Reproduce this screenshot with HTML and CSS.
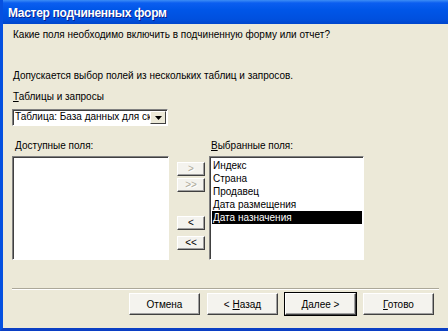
FILE: index.html
```html
<!DOCTYPE html>
<html lang="ru">
<head>
    <meta charset="UTF-8">
    <title>Мастер подчиненных форм</title>
    <link rel="stylesheet" href="styles.css">
</head>
<body>
    <div class="window">
        <div class="titlebar">Мастер подчиненных форм</div>
        <div class="content">
            <p class="question">Какие поля необходимо включить в подчиненную форму или отчет?</p>
            <p class="hint">Допускается выбор полей из нескольких таблиц и запросов.</p>
            <p class="label"><u>Т</u>аблицы и запросы</p>
            <div class="select">
                <span class="select-text">Таблица: База данных для ск</span>
                <span class="select-arrow">
                    <svg width="7" height="4" viewBox="0 0 7 4"><path d="M0 0h7L3.5 4z" fill="#000"/></svg>
                </span>
            </div>
            <div class="fields">
                <div class="col">
                    <p class="label"><u>Д</u>оступные поля:</p>
                    <div class="list"></div>
                </div>
                <div class="shuttle">
                    <button class="btn small" disabled>&gt;</button>
                    <button class="btn small" disabled>&gt;&gt;</button>
                    <button class="btn small gap">&lt;</button>
                    <button class="btn small last">&lt;&lt;</button>
                </div>
                <div class="col">
                    <p class="label"><u>В</u>ыбранные поля:</p>
                    <div class="list">
                        <div class="item">Индекс</div>
                        <div class="item">Страна</div>
                        <div class="item">Продавец</div>
                        <div class="item">Дата размещения</div>
                        <div class="item selected">Дата назначения</div>
                    </div>
                </div>
            </div>
        </div>
        <div class="footer">
            <button class="btn wide">Отмена</button>
            <button class="btn wide">&lt; <u>Н</u>азад</button>
            <button class="btn wide default"><u>Д</u>алее &gt;</button>
            <button class="btn wide"><u>Г</u>отово</button>
        </div>
    </div>
</body>
</html>
```

FILE: styles.css
```css
body {
    margin: 0;
    font-family: 'Liberation Sans', Arial, sans-serif;
    font-size: 10px;
    color: #000;
    background: #ece9d8;
}
.window {
    width: 448px;
    height: 331px;
    box-sizing: border-box;
    display: flex;
    flex-direction: column;
    background: #ece9d8;
    border-left: 3px solid #0550e0;
    border-bottom: 3px solid #0b3fc4;
    overflow: hidden;
}
.titlebar {
    height: 24px;
    margin-left: -3px;
    padding-left: 8px;
    line-height: 26px;
    color: #fff;
    font-weight: bold;
    font-size: 12px;
    letter-spacing: -0.3px;
    text-shadow: 1px 1px 0 #0a1e8c;
    background: linear-gradient(to bottom, #3d8df5 0, #0b5ef0 3px, #0056e8 40%, #0050de 80%, #0046cc 100%);
    flex-shrink: 0;
}
.content {
    padding: 4px 0 0 9px;
    flex: 1;
}
p {
    margin: 0;
}
.question {
    margin-left: 1px;
    line-height: 13px;
}
.hint {
    margin: 28px 0 0 1px;
    line-height: 13px;
}
.label {
    margin-left: 1px;
    line-height: 13px;
}
.content > .label {
    margin-top: 8px;
}
.select {
    margin-top: 6px;
    width: 156px;
    height: 17px;
    box-sizing: border-box;
    display: flex;
    background: #fff;
    border: 1px solid;
    border-color: #808080 #fff #fff #808080;
    box-shadow: inset 1px 1px 0 #404040;
}
.select-text {
    flex: 1;
    padding-left: 2px;
    line-height: 14px;
    white-space: nowrap;
    overflow: hidden;
}
.select-arrow {
    width: 14px;
    display: flex;
    align-items: center;
    justify-content: center;
    margin: 1px 1px 1px 0;
    background: #ece9d8;
    border: 1px solid;
    border-color: #fff #404040 #404040 #fff;
}
.fields {
    margin-top: 13px;
    display: flex;
}
.col .label {
    margin-left: 3px;
    margin-bottom: 4px;
}
.list {
    width: 157px;
    height: 104px;
    box-sizing: border-box;
    background: #fff;
    border: 1px solid;
    border-color: #808080 #fff #fff #808080;
    box-shadow: inset 1px 1px 0 #404040;
    padding: 2px 0 0 2px;
}
.fields .col:last-child .list {
    width: 155px;
}
.fields .col:last-child .label {
    margin-left: 2px;
}
.item {
    height: 13px;
    line-height: 13px;
    padding-left: 1px;
    white-space: nowrap;
}
.item.selected {
    background: #000;
    color: #fff;
    margin-right: 1px;
}
.shuttle {
    width: 40px;
    padding: 23px 0 0 8px;
    box-sizing: border-box;
    display: flex;
    flex-direction: column;
    align-items: flex-start;
}
.btn {
    font-family: inherit;
    font-size: 10px;
    color: #000;
    background: #f4f3ee;
    border: 1px solid;
    border-color: #fff #404040 #404040 #fff;
    box-shadow: inset -1px -1px 0 #a0a0a0;
    padding: 0;
}
.btn:disabled {
    color: #aca899;
    text-shadow: 1px 1px 0 #fff;
}
.btn.small {
    width: 28px;
    height: 14px;
    line-height: 10px;
    margin-bottom: 2px;
}
.btn.gap {
    margin-top: 22px;
    margin-bottom: 6px;
}
.footer {
    flex-shrink: 0;
    margin: 0 9px 0 9px;
    padding: 4px 5px 13px 0;
    border-top: 1px solid #aca899;
    box-shadow: inset 0 1px 0 #fff;
    display: flex;
    justify-content: flex-end;
    gap: 7px;
}
.btn.wide {
    width: 71px;
    height: 22px;
}
.btn.default {
    outline: 1px solid #000;
    outline-offset: 0;
}
```
